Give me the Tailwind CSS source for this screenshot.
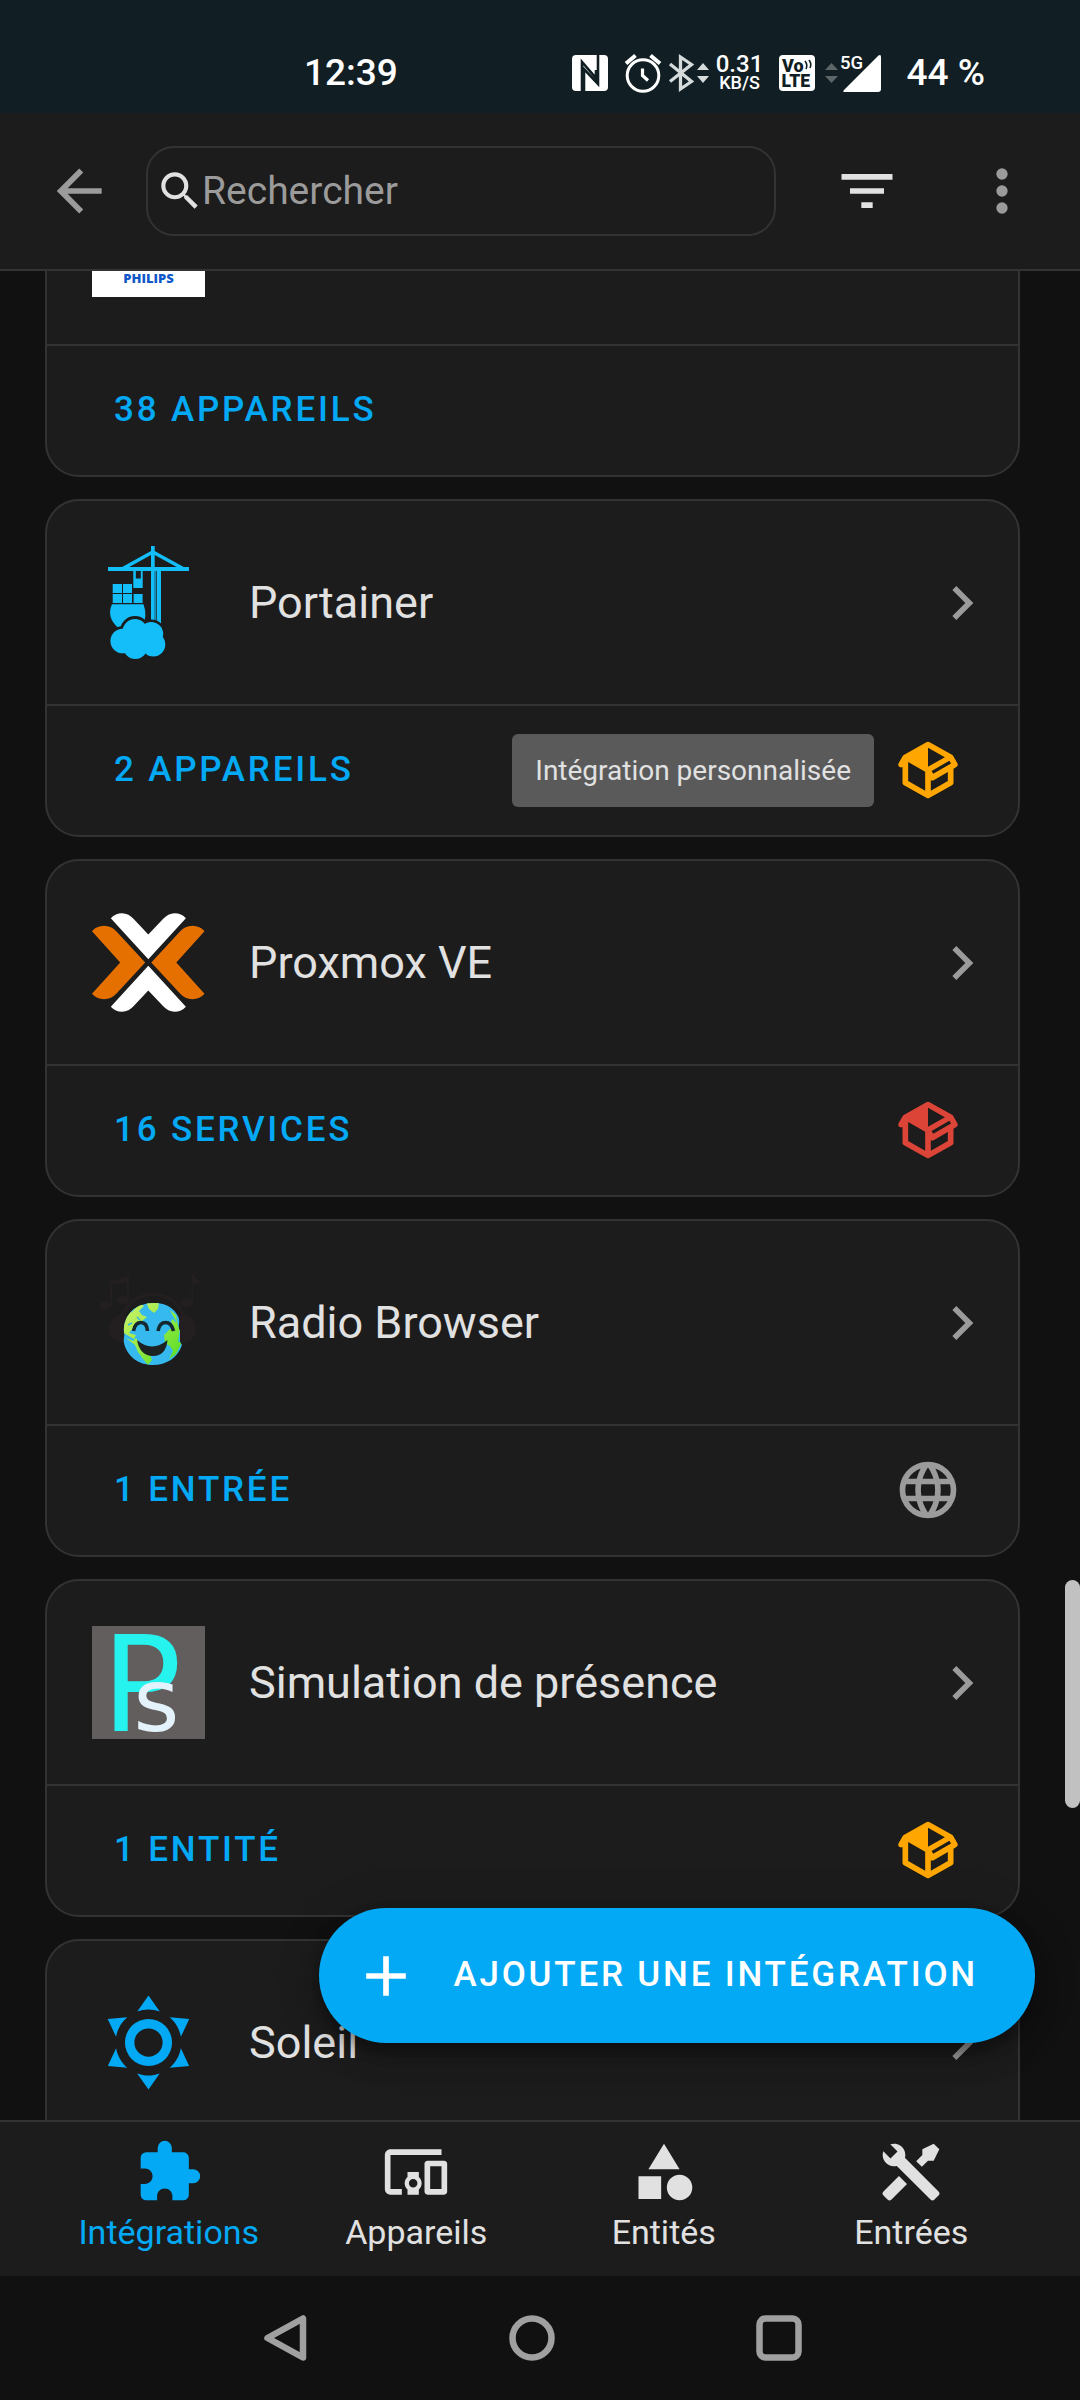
<!DOCTYPE html>
<html lang="fr">
<head>
<meta charset="utf-8">
<meta name="viewport" content="width=device-width, initial-scale=1">
<title>Intégrations</title>
<script src="https://cdn.jsdelivr.net/npm/@tailwindcss/browser@4"></script>
</head>
<body class="flex h-screen flex-col overflow-hidden bg-[#111111] font-['Roboto',sans-serif] text-[#e1e1e1]">

<svg class="hidden" aria-hidden="true">
  <symbol id="chevron" viewBox="0 0 24 24"><path d="M8.59,16.58L13.17,12L8.59,7.41L10,6L16,12L10,18L8.59,16.58Z"/></symbol>
  <symbol id="package" viewBox="0 0 24 24"><path d="M2,10.96C1.5,10.68 1.35,10.07 1.63,9.59L3.13,7C3.24,6.8 3.41,6.66 3.6,6.58L11.43,2.18C11.59,2.06 11.79,2 12,2C12.21,2 12.41,2.06 12.57,2.18L20.47,6.62C20.66,6.72 20.82,6.88 20.91,7.08L22.36,9.6C22.64,10.08 22.47,10.69 22,10.96L21,11.54V16.5C21,16.88 20.79,17.21 20.47,17.38L12.57,21.82C12.41,21.94 12.21,22 12,22C11.79,22 11.59,21.94 11.43,21.82L3.53,17.38C3.21,17.21 3,16.88 3,16.5V10.96C2.7,11.13 2.32,11.14 2,10.96M12,4.15V4.15L12,10.85V10.85L17.96,7.5L12,4.15M5,15.91L11,19.29V12.58L5,9.21V15.91M19,15.91V12.69L14,15.59C13.67,15.77 13.3,15.76 13,15.6V19.29L19,15.91M13.85,13.36L20.13,9.73L19.55,8.72L13.27,12.35L13.85,13.36Z"/></symbol>
</svg>

<!-- Status bar -->
<div class="flex h-[113px] shrink-0 items-center bg-[#111e23] pt-8 pr-[95px] pl-[304px] text-white">
  <span class="text-[37px] leading-[44px] font-medium">12:39</span>
  <div class="ml-auto flex items-center">
    <svg class="size-9" viewBox="0 0 36 36" role="img" aria-label="NFC"><rect width="36" height="36" rx="4" fill="#fff"/><path d="M10 36V7L24 23V15M26 0v29L12 14v22" fill="none" stroke="#111e23" stroke-width="2.6"/></svg>
    <svg class="ml-4 h-10 w-[38px]" viewBox="0 0 38 40" fill="none" stroke="#fff" role="img" aria-label="Alarme"><circle cx="19" cy="22.500" r="15.800" stroke-width="3"/><path d="M2 10.500L11.500 2.500M36 10.500L26.500 2.500" stroke-width="4"/><path d="M18.500 15.500v7l5.500 5" stroke-width="3.200"/></svg>
    <svg class="ml-[6px] h-10 w-[42px]" viewBox="0 0 42 40" role="img" aria-label="Bluetooth"><path d="M2 11L23.500 28.500L12.500 36V4L23.500 11.500L2 28.500" fill="none" stroke="#d5dadb" stroke-width="3.300"/><path d="M29 17l6-7 6 7zM29 23l6 7 6-7z" fill="#d5dadb"/></svg>
    <div class="ml-[8px] flex w-[44px] flex-col items-center font-medium"><span class="text-[24px] leading-[20px]">0.31</span><span class="text-[18px] leading-[18px]">KB/S</span></div>
    <svg class="ml-[17px] size-9" viewBox="0 0 36 36" role="img" aria-label="VoLTE"><rect width="36" height="36" rx="4" fill="#fff"/><text x="3" y="16.500" font-size="18" font-weight="900" fill="#111e23">Vo</text><text x="2.500" y="32" font-size="17.500" font-weight="900" fill="#111e23">LTE</text><path d="M26 6q3 4 1 8M30 5q3 4 1 8" fill="none" stroke="#111e23" stroke-width="1.600"/></svg>
    <svg class="ml-[8px] h-10 w-[60px]" viewBox="0 0 60 40" role="img" aria-label="Réseau 5G"><path d="M2 17l6.500-7 6.500 7zM2 23l6.500 7 6.500-7z" fill="#5c6568"/><path d="M55.500 2.500Q58 1 58 4V36Q58 39 55 39H22Q19 39 21 37Z" fill="#fff"/><text x="17" y="15.500" font-size="18.500" font-weight="500" fill="#fff">5G</text></svg>
    <span class="ml-[24px] text-[37px] leading-[44px] font-medium">44 %</span>
  </div>
</div>

<!-- Toolbar -->
<header class="flex h-[158px] shrink-0 items-center border-b-2 border-[#333333] bg-[#1c1c1c] pr-[44px] pl-[45px]">
  <button aria-label="Retour" class="text-[#9b9b9b]"><svg class="size-[68px]" viewBox="0 0 24 24" fill="currentColor"><path d="M20,11V13H8L13.500,18.500L12.080,19.920L4.160,12L12.080,4.080L13.500,5.500L8,11H20Z"/></svg></button>
  <label class="ml-[33px] flex h-[90px] min-w-0 flex-1 items-center rounded-[28px] border-2 border-[#333333] pl-[7px]">
    <svg class="-mr-[3px] size-[50px] shrink-0" viewBox="0 0 24 24" fill="currentColor" aria-hidden="true"><path d="M9.500,3A6.500,6.500 0 0,1 16,9.500C16,11.110 15.410,12.590 14.440,13.730L14.710,14H15.500L20.500,19L19,20.500L14,15.500V14.710L13.730,14.440C12.590,15.410 11.110,16 9.500,16A6.500,6.500 0 0,1 3,9.500A6.500,6.500 0 0,1 9.500,3M9.500,5C7,5 5,7 5,9.500C5,12 7,14 9.500,14C12,14 14,12 14,9.500C14,7 12,5 9.500,5Z"/></svg>
    <input type="search" aria-label="Rechercher" placeholder="Rechercher" class="min-w-0 flex-1 bg-transparent text-[39px] leading-[48px] outline-none placeholder:text-[#9b9b9b]">
  </label>
  <button aria-label="Filtrer" class="ml-[57px]"><svg class="size-[68px]" viewBox="0 0 24 24" fill="currentColor"><path d="M6,13H18V11H6M3,6V8H21V6M10,18H14V16H10V18Z"/></svg></button>
  <button aria-label="Menu" class="ml-[67px] text-[#9b9b9b]"><svg class="size-[68px]" viewBox="0 0 24 24" fill="currentColor"><path d="M12,16A2,2 0 0,1 14,18A2,2 0 0,1 12,20A2,2 0 0,1 10,18A2,2 0 0,1 12,16M12,10A2,2 0 0,1 14,12A2,2 0 0,1 12,14A2,2 0 0,1 10,12A2,2 0 0,1 12,10M12,4A2,2 0 0,1 14,6A2,2 0 0,1 12,8A2,2 0 0,1 10,6A2,2 0 0,1 12,4Z"/></svg></button>
</header>

<!-- Integration list -->
<main class="relative min-h-0 flex-1 overflow-hidden">
  <div class="-mt-[132px] flex flex-col gap-[22px] pr-[60px] pl-[45px]">

    <article class="rounded-[34px] border-2 border-[#333333] bg-[#1c1c1c]">
      <div class="flex items-center px-[45px] pt-[43px] pb-[47px]">
        <svg class="size-[113px]" viewBox="0 0 113 113" role="img" aria-label="Philips"><rect width="113" height="113" fill="#fff"/><text x="56.500" y="99" text-anchor="middle" font-family="Open Sans, sans-serif" font-size="13" font-weight="800" fill="#1059c9">PHILIPS</text></svg>
      </div>
      <div class="flex h-[131px] items-center border-t-2 border-[#333333] px-[67px] pb-0.5">
        <a href="#" class="text-[35px] leading-[44px] font-medium tracking-[0.08em] text-[#03a9f4]">38 APPAREILS</a>
      </div>
    </article>

    <article class="rounded-[34px] border-2 border-[#333333] bg-[#1c1c1c]">
      <a href="#" class="flex items-center gap-[44px] py-[45px] pr-[22px] pl-[45px]">
        <svg class="size-[113px] shrink-0" viewBox="0 0 113 113" fill="#13bef9" aria-hidden="true">
          <path d="M59 0h3.700v80H59zM65 25h4v55h-4zM63.300 25h1v55h-1zM16 21h81v4H16z"/>
          <path d="M31 22.500L60.800 6L91 22.500" fill="none" stroke="#13bef9" stroke-width="3.500"/>
          <path d="M41.300 25h2.500v7.600h5V25h1.900v17H41.300zM20.700 38H30v9h-9.300zM31 38h9v9h-9zM20.700 48H30v9h-9.300zM31 48h9v9h-9zM41.600 48h9v9h-9z"/>
          <path d="M20 58.300H51.500Q56 70 50 81.700H26Q14 71 20 58.300Z"/>
          <g stroke="#1c1c1c" stroke-width="5"><circle cx="30.700" cy="95" r="12.300"/><circle cx="43" cy="85" r="12.500"/><circle cx="59.200" cy="88" r="12"/><circle cx="61.300" cy="98.500" r="12"/><circle cx="43.300" cy="101" r="12"/></g>
          <circle cx="30.700" cy="95" r="12.300"/><circle cx="43" cy="85.500" r="12.500"/><circle cx="59.200" cy="88" r="12"/><circle cx="61.300" cy="98.500" r="12"/><circle cx="43.300" cy="101" r="12"/><path d="M32 88h30v14H32z"/>
        </svg>
        <span class="flex-1 text-[45px] leading-[56px]">Portainer</span>
        <svg class="size-[68px] shrink-0" fill="#9b9b9b" aria-hidden="true"><use href="#chevron"/></svg>
      </a>
      <div class="relative flex h-[131px] items-center justify-between border-t-2 border-[#333333] pr-[56px] pb-0.5 pl-[67px]">
        <a href="#" class="text-[35px] leading-[44px] font-medium tracking-[0.08em] text-[#03a9f4]">2 APPAREILS</a>
        <svg class="size-[68px]" fill="#ffa600" aria-hidden="true"><use href="#package"/></svg>
        <div role="tooltip" class="absolute top-[28px] right-[144px] rounded-[6px] bg-[#5a5a5a] px-[23px] py-[18px] text-[28px] leading-[37px]">Intégration personnalisée</div>
      </div>
    </article>

    <article class="rounded-[34px] border-2 border-[#333333] bg-[#1c1c1c]">
      <a href="#" class="flex items-center gap-[44px] py-[45px] pr-[22px] pl-[45px]">
        <svg class="size-[113px] shrink-0" viewBox="0 0 113 113" aria-hidden="true">
          <path fill="#fff" d="M18.800 12.200Q23.500 7.200 30 7.200Q37 7.500 41.700 13L56.300 28.500L71 13Q76 7.500 82.500 7.200Q89.500 7.200 93.900 12.200L56.300 53.300Z"/>
          <path fill="#fff" d="M18.800 100.800Q23.500 105.800 30 105.800Q37 105.500 41.700 100L56.300 84.500L71 100Q76 105.500 82.500 105.800Q89.500 105.800 93.900 100.800L56.300 59.700Z"/>
          <path fill="#e57000" d="M0 25.200Q4.500 20 12 19.800Q19.500 20 24.500 25.500L53.200 56.500L24.500 87.500Q19.500 93 12 93.200Q4.500 93 0 87.800L28.200 56.500Z"/>
          <path fill="#e57000" d="M112.500 25.200Q108 20 100.500 19.800Q93 20 88 25.500L59.300 56.500L88 87.500Q93 93 100.500 93.200Q108 93 112.500 87.800L84.300 56.500Z"/>
        </svg>
        <span class="flex-1 text-[45px] leading-[56px]">Proxmox VE</span>
        <svg class="size-[68px] shrink-0" fill="#9b9b9b" aria-hidden="true"><use href="#chevron"/></svg>
      </a>
      <div class="flex h-[131px] items-center justify-between border-t-2 border-[#333333] pr-[56px] pb-0.5 pl-[67px]">
        <a href="#" class="text-[35px] leading-[44px] font-medium tracking-[0.08em] text-[#03a9f4]">16 SERVICES</a>
        <svg class="size-[68px]" fill="#db4437" aria-hidden="true"><use href="#package"/></svg>
      </div>
    </article>

    <article class="rounded-[34px] border-2 border-[#333333] bg-[#1c1c1c]">
      <a href="#" class="flex items-center gap-[44px] py-[45px] pr-[22px] pl-[45px]">
        <svg class="size-[113px] shrink-0" viewBox="0 0 113 113" aria-hidden="true">
          <defs>
            <clipPath id="globe"><path d="M61 37C78 37 83 45 86 50C89 56 85 60 88 65V76L90 79C86 92 74 99 61 99C46 99 35 90 32 77C31 73 33 70 32 66C31 48 45 37 61 37Z"/></clipPath>
            <linearGradient id="land" x1="0" y1="0" x2="1" y2="1"><stop offset="0" stop-color="#d8f56c"/><stop offset="1" stop-color="#50dc1e"/></linearGradient>
          </defs>
          <g fill="#231f20"><path d="M18 15L37 10V35H35V16L20 19V40H18zM100 8l8 8-7 3v20h-2z"/><ellipse cx="13" cy="39.500" rx="6" ry="4"/><ellipse cx="31" cy="34" rx="6" ry="4"/><ellipse cx="94" cy="37" rx="6.500" ry="4.500"/><path d="M28 50Q38 27 61 27T94 50L91 52Q82 30 61 30T31 52Z"/><ellipse cx="30" cy="63" rx="13" ry="14"/><ellipse cx="92" cy="63" rx="12" ry="14"/></g>
          <g clip-path="url(#globe)">
            <rect x="30" y="35" width="62" height="66" fill="#36b9ee"/>
            <path fill="url(#land)" d="M30 66L32 52L42 41L47 37L52 40L47 45L50 49L55 51L50 55L44 57L41 62L37 67L44 69L42 73L35 69ZM54 36H67L66 43L62 47L57 43ZM78 44L84 49L86 60L88 63L86 76H90L84 88L77 93L81 85L78 80L73 77L72 69L77 64L81 61L79 55L82 52ZM34 72L41 75L44 72L48 78L62 84L58 88L60 94L56 99L51 93L46 86L43 79Z"/>
            <path d="M39 46l4-4M45 51l3 3M36 59l4-2M80 50l4 6" stroke="#36b9ee" stroke-width="1.500"/>
          </g>
          <path d="M41.500 65Q43 56.500 49 56.500T55.500 65M66 65Q67.500 56.500 73.500 56.500T81.500 65" fill="none" stroke="#152a30" stroke-width="3.600"/>
          <path d="M45 74Q60 87 75.500 74Q74 90 61 90T45 74Z" fill="#1c2222"/>
        </svg>
        <span class="flex-1 text-[45px] leading-[56px]">Radio Browser</span>
        <svg class="size-[68px] shrink-0" fill="#9b9b9b" aria-hidden="true"><use href="#chevron"/></svg>
      </a>
      <div class="flex h-[131px] items-center justify-between border-t-2 border-[#333333] pr-[56px] pb-0.5 pl-[67px]">
        <a href="#" class="text-[35px] leading-[44px] font-medium tracking-[0.08em] text-[#03a9f4]">1 ENTRÉE</a>
        <svg class="size-[68px]" viewBox="0 0 24 24" fill="#9b9b9b" aria-hidden="true"><path d="M16.360,14C16.440,13.340 16.500,12.680 16.500,12C16.500,11.320 16.440,10.660 16.360,10H19.740C19.900,10.640 20,11.310 20,12C20,12.690 19.900,13.360 19.740,14M14.590,19.560C15.190,18.450 15.650,17.250 15.970,16H18.920C17.960,17.650 16.430,18.930 14.590,19.560M14.340,14H9.660C9.560,13.340 9.500,12.680 9.500,12C9.500,11.320 9.560,10.650 9.660,10H14.340C14.430,10.650 14.500,11.320 14.500,12C14.500,12.680 14.430,13.340 14.340,14M12,19.960C11.170,18.760 10.500,17.430 10.090,16H13.910C13.500,17.430 12.830,18.760 12,19.960M8,8H5.080C6.030,6.340 7.570,5.060 9.400,4.440C8.800,5.550 8.350,6.750 8,8M5.080,16H8C8.350,17.250 8.800,18.450 9.400,19.560C7.570,18.930 6.030,17.650 5.080,16M4.260,14C4.100,13.360 4,12.690 4,12C4,11.310 4.100,10.640 4.260,10H7.640C7.560,10.660 7.500,11.320 7.500,12C7.500,12.680 7.560,13.340 7.640,14M12,4.030C12.830,5.230 13.500,6.570 13.910,8H10.090C10.500,6.570 11.170,5.230 12,4.030M18.920,8H15.970C15.650,6.750 15.190,5.550 14.590,4.440C16.430,5.070 17.960,6.340 18.920,8M12,2C6.470,2 2,6.500 2,12A10,10 0 0,0 12,22A10,10 0 0,0 22,12A10,10 0 0,0 12,2Z"/></svg>
      </div>
    </article>

    <article class="rounded-[34px] border-2 border-[#333333] bg-[#1c1c1c]">
      <a href="#" class="flex items-center gap-[44px] py-[45px] pr-[22px] pl-[45px]">
        <svg class="size-[113px] shrink-0" viewBox="0 0 113 113" font-family="DejaVu Sans, sans-serif" aria-hidden="true"><rect width="113" height="113" fill="#625e5e"/><text x="9.500" y="105" font-size="133" fill="#27f3ee">P</text><text x="41.500" y="105" font-size="88" fill="#e4f3fb">s</text></svg>
        <span class="flex-1 text-[45px] leading-[56px]">Simulation de présence</span>
        <svg class="size-[68px] shrink-0" fill="#9b9b9b" aria-hidden="true"><use href="#chevron"/></svg>
      </a>
      <div class="flex h-[131px] items-center justify-between border-t-2 border-[#333333] pr-[56px] pb-0.5 pl-[67px]">
        <a href="#" class="text-[35px] leading-[44px] font-medium tracking-[0.08em] text-[#03a9f4]">1 ENTITÉ</a>
        <svg class="size-[68px]" fill="#ffa600" aria-hidden="true"><use href="#package"/></svg>
      </div>
    </article>

    <article class="h-[338px] rounded-[34px] border-2 border-[#333333] bg-[#1c1c1c]">
      <a href="#" class="flex items-center gap-[44px] py-[45px] pr-[22px] pl-[45px]">
        <svg class="size-[113px] shrink-0" viewBox="0 0 24 24" fill="#03a9f4" aria-hidden="true"><path d="M12,7A5,5 0 0,1 17,12A5,5 0 0,1 12,17A5,5 0 0,1 7,12A5,5 0 0,1 12,7M12,9A3,3 0 0,0 9,12A3,3 0 0,0 12,15A3,3 0 0,0 15,12A3,3 0 0,0 12,9M12,2L14.390,5.420C13.650,5.150 12.840,5 12,5C11.160,5 10.350,5.150 9.610,5.420L12,2M3.340,7L7.500,6.650C6.900,7.160 6.360,7.780 5.940,8.500C5.500,9.240 5.250,10 5.110,10.790L3.340,7M3.360,17L5.120,13.230C5.260,14 5.530,14.780 5.950,15.500C6.370,16.240 6.910,16.860 7.500,17.370L3.360,17M20.650,7L18.880,10.790C18.740,10 18.470,9.230 18.050,8.500C17.630,7.780 17.100,7.150 16.500,6.640L20.650,7M20.640,17L16.500,17.360C17.090,16.850 17.620,16.220 18.040,15.500C18.460,14.770 18.730,14 18.870,13.210L20.640,17M12,22L9.590,18.560C10.330,18.830 11.140,19 12,19C12.820,19 13.630,18.830 14.370,18.560L12,22Z"/></svg>
        <span class="flex-1 text-[45px] leading-[56px]">Soleil</span>
        <svg class="size-[68px] shrink-0" fill="#9b9b9b" aria-hidden="true"><use href="#chevron"/></svg>
      </a>
    </article>
  </div>

  <!-- Scroll thumb and floating action button -->
  <div class="absolute top-[1309px] right-0 h-[228px] w-[15px] rounded-full bg-[#c1c1c1]"></div>
  <button class="absolute right-[45px] bottom-[77px] flex h-[135px] items-center rounded-full bg-[#03a9f4] pr-[57px] pl-[33px] text-white shadow-[0_8px_14px_rgba(0,0,0,0.3),0_16px_28px_rgba(0,0,0,0.14),0_3px_50px_rgba(0,0,0,0.12)]">
    <svg class="size-[68px]" viewBox="0 0 24 24" fill="currentColor" aria-hidden="true"><path d="M19,13H13V19H11V13H5V11H11V5H13V11H19V13Z"/></svg>
    <span class="ml-[33px] pb-0.5 text-[35px] leading-[44px] font-medium tracking-[0.08em] whitespace-nowrap">AJOUTER UNE INTÉGRATION</span>
  </button>
</main>

<!-- Bottom tabs -->
<nav class="grid h-[156px] shrink-0 grid-cols-4 border-t-2 border-[#333333] bg-[#1c1c1c] px-[45px] pt-4 text-[34px] leading-[40px]">
  <a href="#" aria-current="page" class="flex flex-col items-center gap-[6px] text-[#03a9f4]"><svg class="size-[68px]" viewBox="0 0 24 24" fill="currentColor" aria-hidden="true"><path d="M20.500,11H19V7C19,5.890 18.100,5 17,5H13V3.500A2.500,2.500 0 0,0 10.500,1A2.500,2.500 0 0,0 8,3.500V5H4A2,2 0 0,0 2,7V10.800H3.500C5,10.800 6.200,12 6.200,13.500C6.200,15 5,16.200 3.500,16.200H2V20A2,2 0 0,0 4,22H7.800V20.500C7.800,19 9,17.800 10.500,17.800C12,17.800 13.200,19 13.200,20.500V22H17A2,2 0 0,0 19,20V16H20.500A2.500,2.500 0 0,0 23,13.500A2.500,2.500 0 0,0 20.500,11Z"/></svg>Intégrations</a>
  <a href="#" class="flex flex-col items-center gap-[6px]"><svg class="size-[68px]" viewBox="0 0 24 24" fill="currentColor" aria-hidden="true"><path d="M3 6H21V4H3C1.900 4 1 4.900 1 6V18C1 19.100 1.900 20 3 20H7V18H3V6M13 12H9V13.780C8.390 14.330 8 15.110 8 16C8 16.890 8.390 17.670 9 18.220V20H13V18.220C13.610 17.670 14 16.880 14 16S13.610 14.330 13 13.780V12M11 17.500C10.170 17.500 9.500 16.830 9.500 16S10.170 14.500 11 14.500 12.500 15.170 12.500 16 11.830 17.500 11 17.500M22 8H16C15.500 8 15 8.500 15 9V19C15 19.500 15.500 20 16 20H22C22.500 20 23 19.500 23 19V9C23 8.500 22.500 8 22 8M21 18H17V10H21V18Z"/></svg>Appareils</a>
  <a href="#" class="flex flex-col items-center gap-[6px]"><svg class="size-[68px]" viewBox="0 0 24 24" fill="currentColor" aria-hidden="true"><path d="M11,13.500V21.500H3V13.500H11M12,2L17.500,11H6.500L12,2M17.500,13C20,13 22,15 22,17.500C22,20 20,22 17.500,22C15,22 13,20 13,17.500C13,15 15,13 17.500,13Z"/></svg>Entités</a>
  <a href="#" class="flex flex-col items-center gap-[6px]"><svg class="size-[68px]" viewBox="0 0 24 24" fill="currentColor" aria-hidden="true"><path d="M21.710 20.290L20.290 21.710A1 1 0 0 1 18.880 21.710L7 9.850A3.810 3.810 0 0 1 6 10A4 4 0 0 1 2.220 4.700L4.760 7.240L5.290 6.710L6.710 5.290L7.240 4.760L4.700 2.220A4 4 0 0 1 10 6A3.810 3.810 0 0 1 9.850 7L21.710 18.880A1 1 0 0 1 21.710 20.290M2.290 18.880A1 1 0 0 0 2.290 20.290L3.710 21.710A1 1 0 0 0 5.120 21.710L10.590 16.250L7.760 13.420M20 2L16 4V6L13.830 8.170L15.830 10.170L18 8H20L22 4Z"/></svg>Entrées</a>
</nav>

<!-- System navigation -->
<div class="flex h-[124px] shrink-0 items-center justify-between pr-[277px] pl-[261px]">
  <button aria-label="Précédent"><svg class="size-12" viewBox="0 0 48 48" fill="none" stroke="#a0a0a0" stroke-width="6.500" stroke-linejoin="round"><path d="M6.500 24L42 4.500V43.500Z"/></svg></button>
  <button aria-label="Accueil"><svg class="size-12" viewBox="0 0 48 48" fill="none" stroke="#a0a0a0" stroke-width="6.500"><circle cx="24" cy="24" r="19.500"/></svg></button>
  <button aria-label="Applications récentes"><svg class="size-12" viewBox="0 0 48 48" fill="none" stroke="#a0a0a0" stroke-width="6.500"><rect x="4.500" y="4.500" width="39" height="39" rx="6"/></svg></button>
</div>
</body>
</html>
